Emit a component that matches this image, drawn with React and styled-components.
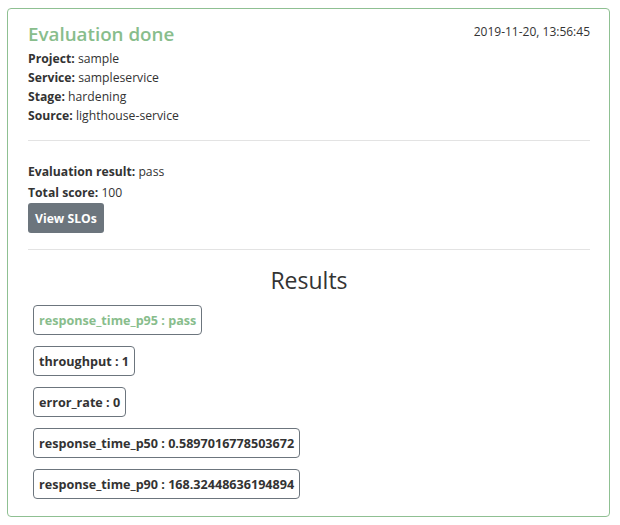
import styled, { createGlobalStyle } from 'styled-components';

const GlobalStyle = createGlobalStyle`
  body {
    margin: 0;
    background: #ffffff;
    font-family: 'Open Sans', 'Noto Sans', sans-serif;
    color: #333333;
  }
`;

const evaluation = {
  time: '2019-11-20, 13:56:45',
  meta: [
    ['Project', 'sample'],
    ['Service', 'sampleservice'],
    ['Stage', 'hardening'],
    ['Source', 'lighthouse-service'],
  ],
  result: 'pass',
  score: 100,
  indicators: [
    { name: 'response_time_p95', value: 'pass', passed: true },
    { name: 'throughput', value: '1' },
    { name: 'error_rate', value: '0' },
    { name: 'response_time_p50', value: '0.5897016778503672' },
    { name: 'response_time_p90', value: '168.32448636194894' },
  ],
};

const App = () => {
  return (
    <Page>
      <GlobalStyle />
      <Card>
        <Header>
          <div>
            <Title>Evaluation done</Title>
            {evaluation.meta.map(([label, value]) => (
              <Line key={label}>
                <b>{label}:</b> {value}
              </Line>
            ))}
          </div>
          <Time>{evaluation.time}</Time>
        </Header>
        <Divider $below={21} />
        <Line $height={20.5}>
          <b>Evaluation result:</b> {evaluation.result}
        </Line>
        <Line $height={20.5}>
          <b>Total score:</b> {evaluation.score}
        </Line>
        <Button>View SLOs</Button>
        <Divider $above={16} $below={15} />
        <Results>Results</Results>
        <Indicators>
          {evaluation.indicators.map((item) => (
            <Indicator key={item.name} $passed={item.passed}>
              {item.name} : {item.value}
            </Indicator>
          ))}
        </Indicators>
      </Card>
    </Page>
  );
};

const Page = styled.div`
  padding: 8px 10px 6px 7px;
`;

const Card = styled.div`
  border: 1px solid #8fc092;
  border-radius: 4px;
  padding: 13px 19px 17px 20px;
`;

const Header = styled.div`
  display: flex;
  justify-content: space-between;
  align-items: flex-start;
`;

const Title = styled.h2`
  margin: 0 0 3px;
  font-size: 18.8px;
  font-weight: 600;
  line-height: 24px;
  color: #88bd8c;
`;

const Time = styled.div`
  font-size: 12px;
  line-height: 19px;
`;

const Line = styled.div`
  font-size: 12.2px;
  line-height: ${({ $height }) => $height || 19}px;

  b {
    font-weight: 700;
  }
`;

const Divider = styled.hr`
  border: 0;
  border-top: 1px solid #e3e3e3;
  margin: ${({ $above }) => $above || 15}px 0 ${({ $below }) => $below || 20}px;
`;

const Button = styled.button`
  display: block;
  height: 30px;
  padding: 0 7px;
  border: 0;
  border-radius: 3px;
  background: #6c757d;
  color: #ffffff;
  font-family: inherit;
  font-size: 12.2px;
  font-weight: 700;
`;

const Results = styled.h3`
  margin: 0 0 9px;
  text-align: center;
  font-size: 23px;
  font-weight: 500;
  line-height: 31px;
  color: #333333;
`;

const Indicators = styled.div`
  display: flex;
  flex-direction: column;
  align-items: flex-start;
  gap: 11px;
  padding-left: 5px;
`;

const Indicator = styled.div`
  height: 30px;
  box-sizing: border-box;
  display: flex;
  align-items: center;
  padding: 0 5px;
  border: 1px solid #6c757d;
  border-radius: 4px;
  font-size: 12.6px;
  font-weight: 700;
  color: ${({ $passed }) => ($passed ? '#88bd8c' : '#333333')};
`;

export default App;
